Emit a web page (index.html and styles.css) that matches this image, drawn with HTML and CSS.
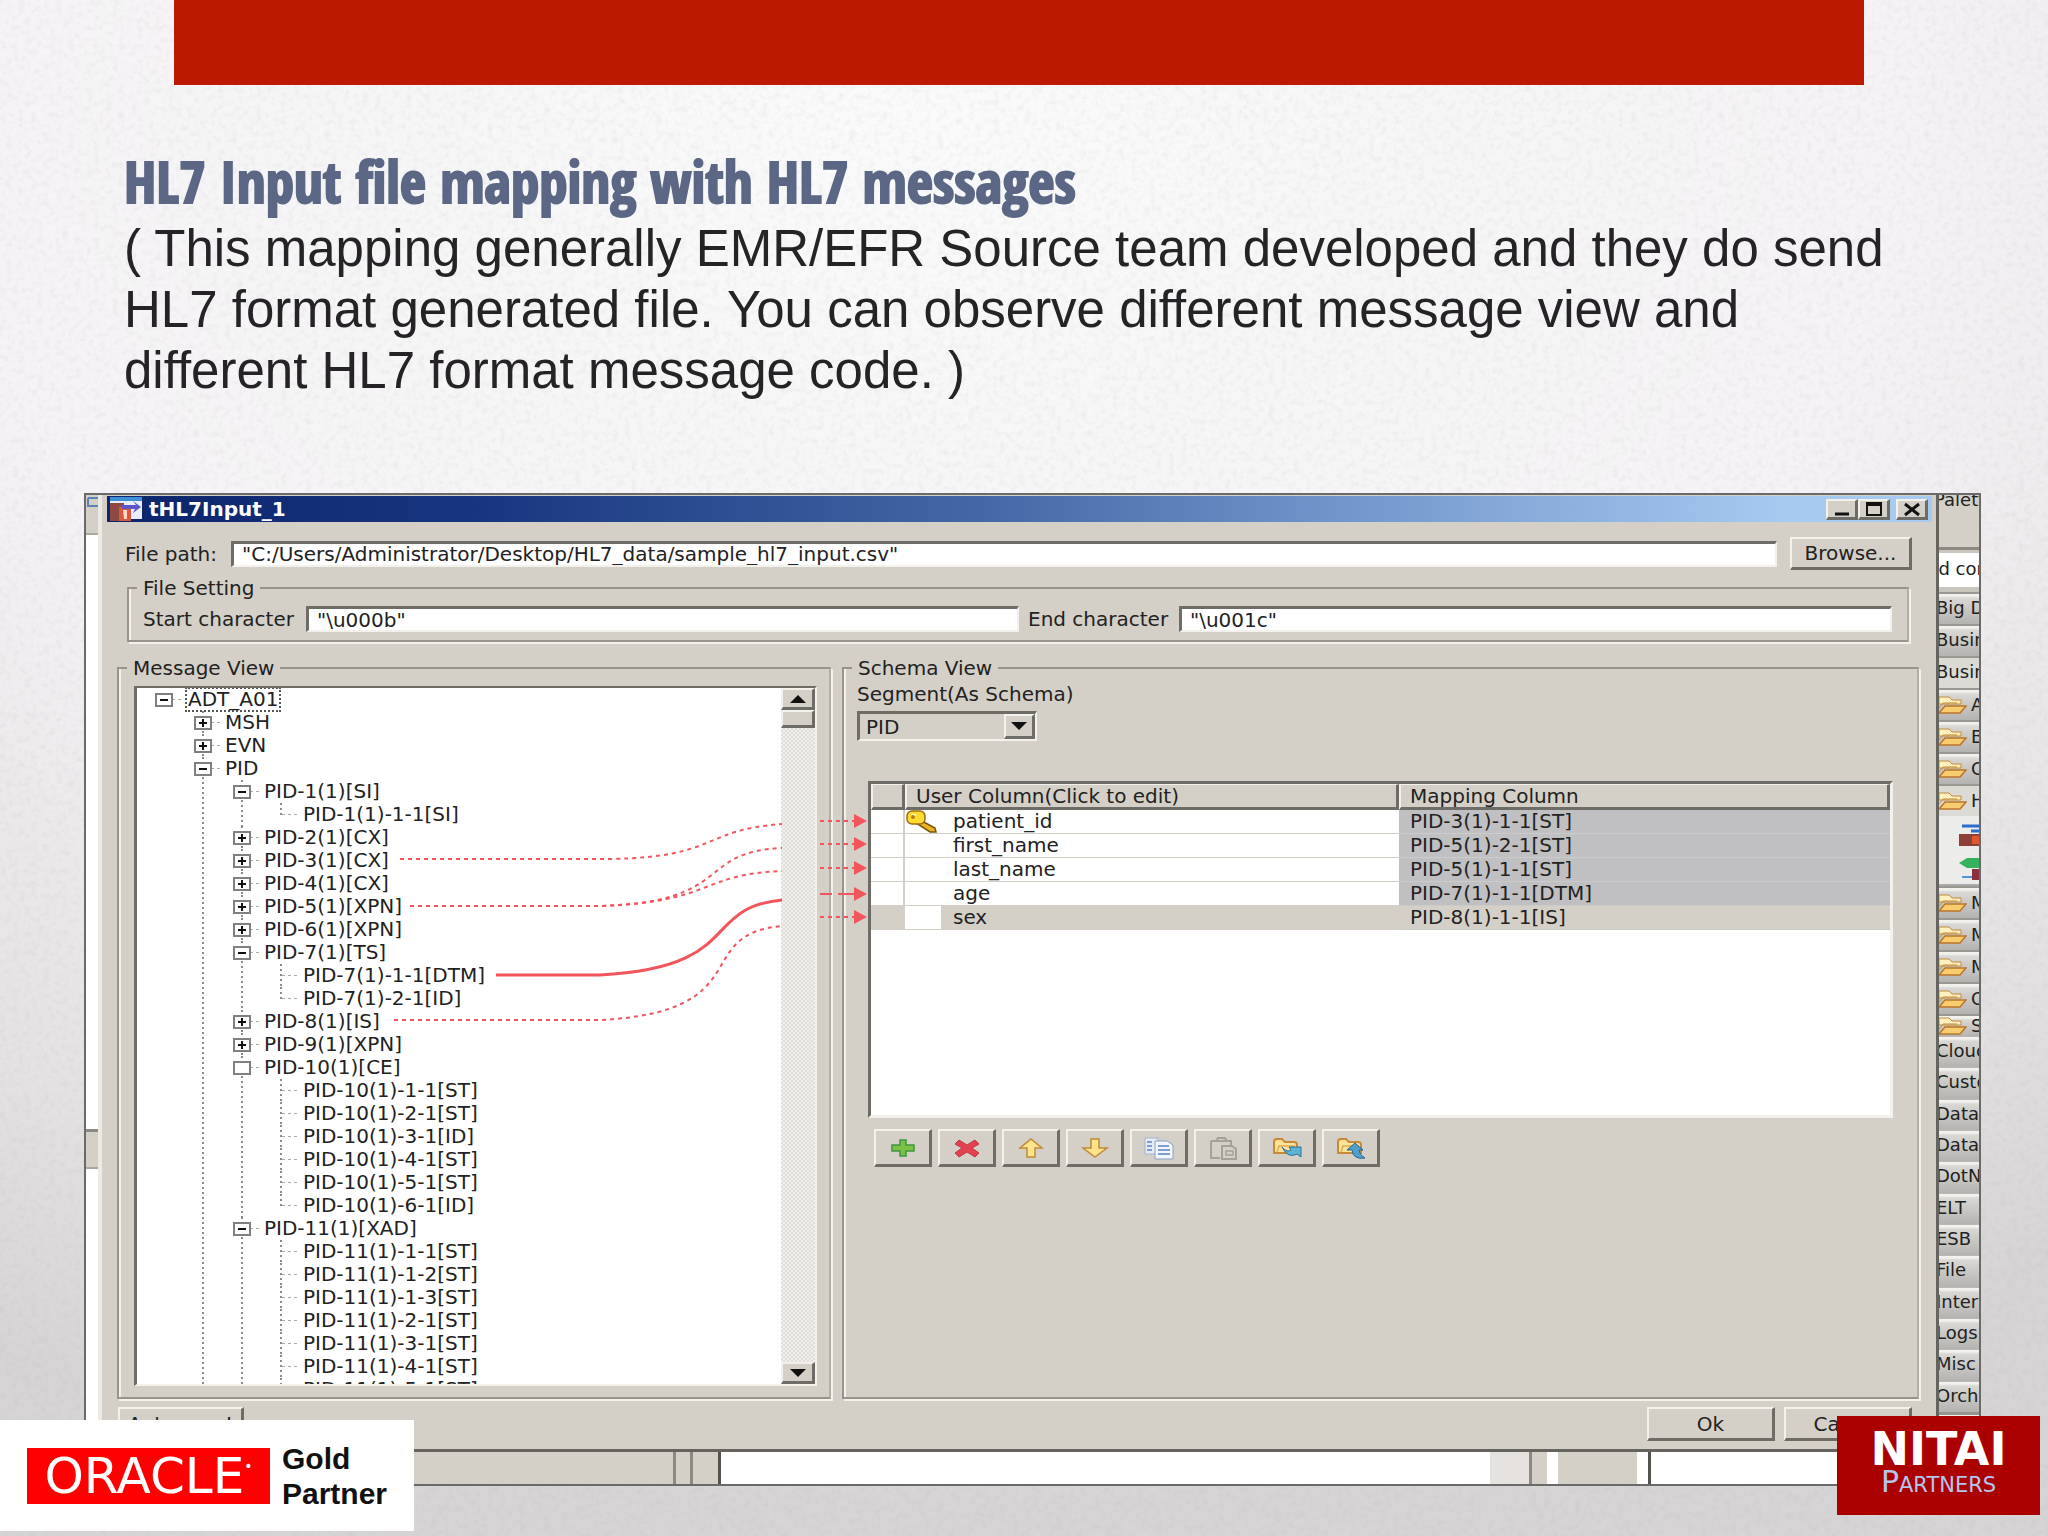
FILE: index.html
```html
<!DOCTYPE html>
<html lang="en">
<head>
<meta charset="utf-8">
<meta name="viewport" content="width=device-width, initial-scale=1">
<title>HL7 Input file mapping with HL7 messages</title>
<link rel="stylesheet" href="styles.css">
</head>
<body>
<svg class="paper" aria-hidden="true">
  <filter id="grain" x="0" y="0" width="100%" height="100%">
    <feTurbulence type="fractalNoise" baseFrequency="0.16" numOctaves="3" seed="4"/>
    <feColorMatrix values="0 0 0 0 0.4  0 0 0 0 0.39  0 0 0 0 0.39  1.6 0 0 0 -0.72"/>
  </filter>
  <rect width="100%" height="100%" filter="url(#grain)"/>
</svg>
<svg class="defs" aria-hidden="true">
  <symbol id="folder" viewBox="0 0 28 20">
    <path d="M0 2h10l3 3h9v4H0z" fill="#fff0c0" stroke="#c08a3c"/>
    <path d="M0 18l6-7h21l-6 7z" fill="#f8cd70" stroke="#b9772c" stroke-width="1.5"/>
    <path d="M0 13l4-5h14" fill="none" stroke="#c08a3c"/>
  </symbol>
  <symbol id="yellow-folder" viewBox="0 0 32 24">
    <path d="M3 17V6q0-3 3-3h5l3 3h9q3 0 3 3v8z" fill="#fde29a" stroke="#c98a35" stroke-width="2"/>
    <path d="M6 16l2-6h16" fill="none" stroke="#e0ac50" stroke-width="1.5"/>
  </symbol>
</svg>

<div class="slide">
  <div class="band"></div>
  <header class="intro">
    <h1>HL7 Input file mapping with HL7 messages</h1>
    <p>( This mapping generally EMR/EFR Source team developed and they do send HL7 format generated file. You can observe different message view and different HL7 format message code. )</p>
  </header>

  <main class="screen">
    <div class="edge">
      <div class="edge-tab"><svg width="12" height="12" viewBox="0 0 12 12"><path d="M2 3h10M2 3v8h10" fill="none" stroke="#5a84b4" stroke-width="2"/></svg></div>
      <div class="edge-page"></div>
      <div class="edge-tab low"></div>
      <div class="edge-page"></div>
    </div>

    <section class="dialog" aria-label="tHL7Input_1">
      <div class="titlebar">
        <svg class="app-icon" width="32" height="24" viewBox="0 0 32 24">
          <rect width="32" height="22" fill="#e8eefc"/><rect width="32" height="4" fill="#3f8fd8"/>
          <rect y="6" width="14" height="18" fill="#8d4a44"/><path d="M9 10h12v14H9z" fill="#d9573c"/>
          <path d="M12 8h14l-3-4 8 6-8 6 2-4H12z" fill="#5a55c8"/><path d="M13 13h4v9h-3z" fill="#ffd9c4"/>
        </svg>
        <span class="caption">tHL7Input_1</span>
        <button class="win" aria-label="Minimize"><svg width="24" height="16" viewBox="0 0 24 16"><path d="M5 13h14" stroke="#111" stroke-width="3"/></svg></button>
        <button class="win" aria-label="Maximize"><svg width="24" height="16" viewBox="0 0 24 16"><path d="M5 2h14v12H5zM5 4h14" fill="none" stroke="#111" stroke-width="2"/></svg></button>
        <button class="win close" aria-label="Close"><svg width="24" height="16" viewBox="0 0 24 16"><path d="M5 3l14 11M19 3L5 14" stroke="#111" stroke-width="3"/></svg></button>
      </div>

      <div class="path-row">
        <label for="path">File path:</label>
        <input id="path" class="field" type="text" value='"C:/Users/Administrator/Desktop/HL7_data/sample_hl7_input.csv"'>
        <button class="push browse">Browse...</button>
      </div>

      <fieldset class="group setting">
        <legend>File Setting</legend>
        <div class="setting-row">
          <label class="start" for="start">Start character</label>
          <input id="start" class="field" type="text" value='"\u000b"'>
          <label class="end" for="end">End character</label>
          <input id="end" class="field" type="text" value='"\u001c"'>
        </div>
      </fieldset>

      <div class="views">
        <fieldset class="group message">
          <legend>Message View</legend>
          <div class="tree-box">
            <ul class="tree">
              <li><div class="node"><button class="toggle" aria-label="Collapse"></button><span class="focus">ADT_A01</span></div>
                <ul>
                  <li><div class="node"><button class="toggle plus" aria-label="Expand"></button>MSH</div></li>
                  <li><div class="node"><button class="toggle plus" aria-label="Expand"></button>EVN</div></li>
                  <li class="open"><div class="node"><button class="toggle" aria-label="Collapse"></button>PID</div>
                    <ul>
                      <li><div class="node"><button class="toggle" aria-label="Collapse"></button>PID-1(1)[SI]</div>
                        <ul><li><div class="node leaf">PID-1(1)-1-1[SI]</div></li></ul></li>
                      <li><div class="node"><button class="toggle plus" aria-label="Expand"></button>PID-2(1)[CX]</div></li>
                      <li><div class="node"><button class="toggle plus" aria-label="Expand"></button>PID-3(1)[CX]</div></li>
                      <li><div class="node"><button class="toggle plus" aria-label="Expand"></button>PID-4(1)[CX]</div></li>
                      <li><div class="node"><button class="toggle plus" aria-label="Expand"></button>PID-5(1)[XPN]</div></li>
                      <li><div class="node"><button class="toggle plus" aria-label="Expand"></button>PID-6(1)[XPN]</div></li>
                      <li><div class="node"><button class="toggle" aria-label="Collapse"></button>PID-7(1)[TS]</div>
                        <ul>
                          <li><div class="node leaf">PID-7(1)-1-1[DTM]</div></li>
                          <li><div class="node leaf">PID-7(1)-2-1[ID]</div></li>
                        </ul></li>
                      <li><div class="node"><button class="toggle plus" aria-label="Expand"></button>PID-8(1)[IS]</div></li>
                      <li><div class="node"><button class="toggle plus" aria-label="Expand"></button>PID-9(1)[XPN]</div></li>
                      <li><div class="node"><button class="toggle blank" aria-label="Collapse"></button>PID-10(1)[CE]</div>
                        <ul>
                          <li><div class="node leaf">PID-10(1)-1-1[ST]</div></li>
                          <li><div class="node leaf">PID-10(1)-2-1[ST]</div></li>
                          <li><div class="node leaf">PID-10(1)-3-1[ID]</div></li>
                          <li><div class="node leaf">PID-10(1)-4-1[ST]</div></li>
                          <li><div class="node leaf">PID-10(1)-5-1[ST]</div></li>
                          <li><div class="node leaf">PID-10(1)-6-1[ID]</div></li>
                        </ul></li>
                      <li class="open"><div class="node"><button class="toggle" aria-label="Collapse"></button>PID-11(1)[XAD]</div>
                        <ul>
                          <li><div class="node leaf">PID-11(1)-1-1[ST]</div></li>
                          <li><div class="node leaf">PID-11(1)-1-2[ST]</div></li>
                          <li><div class="node leaf">PID-11(1)-1-3[ST]</div></li>
                          <li><div class="node leaf">PID-11(1)-2-1[ST]</div></li>
                          <li><div class="node leaf">PID-11(1)-3-1[ST]</div></li>
                          <li><div class="node leaf">PID-11(1)-4-1[ST]</div></li>
                          <li class="open"><div class="node leaf">PID-11(1)-5-1[ST]</div></li>
                        </ul></li>
                    </ul></li>
                </ul></li>
            </ul>
            <div class="scrollbar">
              <button class="step" aria-label="Scroll up"><svg width="16" height="8" viewBox="0 0 16 8"><path d="M0 8l8-8 8 8z" fill="#111"/></svg></button>
              <div class="thumb"></div>
              <div class="track"></div>
              <button class="step" aria-label="Scroll down"><svg width="16" height="8" viewBox="0 0 16 8"><path d="M0 0l8 8 8-8z" fill="#111"/></svg></button>
            </div>
          </div>
        </fieldset>

        <fieldset class="group schema">
          <legend>Schema View</legend>
          <label class="segment-label" for="segment">Segment(As Schema)</label>
          <div class="combo">
            <select id="segment"><option>PID</option></select>
            <span class="combo-arrow"><svg width="16" height="8" viewBox="0 0 16 8"><path d="M0 0l8 8 8-8z" fill="#111"/></svg></span>
          </div>
          <div class="grid-box">
            <table class="columns">
              <colgroup><col class="c-mark"><col class="c-key"><col class="c-user"><col class="c-map"></colgroup>
              <thead><tr><th></th><th colspan="2">User Column(Click to edit)</th><th>Mapping Column</th></tr></thead>
              <tbody>
                <tr><td></td><td class="key"><svg width="34" height="23" viewBox="0 0 34 23"><path d="M15 10l15 8 1 4h-6l-14-9z" fill="#e8b420" stroke="#7a5510" stroke-width="1.5"/><rect x="2" y="1" width="18" height="13" rx="5" fill="#ffdc30" stroke="#9a6c14" stroke-width="1.5"/><path d="M6 5h5" stroke="#fff9c0" stroke-width="2"/><circle cx="8" cy="7" r="2" fill="#c07a18"/></svg></td><td>patient_id</td><td>PID-3(1)-1-1[ST]</td></tr>
                <tr><td></td><td class="key"></td><td>first_name</td><td>PID-5(1)-2-1[ST]</td></tr>
                <tr><td></td><td class="key"></td><td>last_name</td><td>PID-5(1)-1-1[ST]</td></tr>
                <tr><td></td><td class="key"></td><td>age</td><td>PID-7(1)-1-1[DTM]</td></tr>
                <tr class="selected"><td></td><td class="key"></td><td>sex</td><td>PID-8(1)-1-1[IS]</td></tr>
              </tbody>
            </table>
          </div>
          <div class="toolbar">
            <button class="push tool" aria-label="Add"><svg width="32" height="24" viewBox="0 0 32 24"><path d="M13 4h6v5h8v6h-8v5h-6v-5H5V9h8z" fill="#7cc144" stroke="#3f9440" stroke-width="1.5"/></svg></button>
            <button class="push tool" aria-label="Remove"><svg width="32" height="24" viewBox="0 0 32 24"><path d="M8 4l8 5 8-5 4 4-7 4 7 5-4 4-8-5-8 5-4-4 7-5-7-4z" fill="#e2414f" stroke="#c03844"/></svg></button>
            <button class="push tool" aria-label="Move up"><svg width="32" height="24" viewBox="0 0 32 24"><path d="M16 3l11 9h-7v9h-8v-9H5z" fill="#ffe48c" stroke="#c08a34" stroke-width="1.5"/></svg></button>
            <button class="push tool" aria-label="Move down"><svg width="32" height="24" viewBox="0 0 32 24"><path d="M16 21l12-9h-8V3h-8v9H4z" fill="#ffe48c" stroke="#c08a34" stroke-width="1.5"/></svg></button>
            <button class="push tool" aria-label="Copy"><svg width="32" height="24" viewBox="0 0 32 24"><path d="M2 2h13v16H2z" fill="#e6ecf6" stroke="#a4b4d0"/><path d="M4 6h5M4 10h5M4 14h5" stroke="#7f9ed0" stroke-width="2"/><path d="M12 5h12l6 4v14H12z" fill="#f2f6fc" stroke="#8ca0c8"/><path d="M15 10h11M15 14h12M15 18h12" stroke="#7f9ed0" stroke-width="2"/></svg></button>
            <button class="push tool" aria-label="Paste"><svg width="32" height="24" viewBox="0 0 32 24"><path d="M4 5h20v4M4 5v17h9M9 5l2-3h7l2 3M15 10h10l4 3v10H15z" fill="none" stroke="#a3a199" stroke-width="2"/><path d="M19 14v5h7v-4h-7" fill="none" stroke="#a3a199" stroke-width="1.5"/></svg></button>
            <button class="push tool" aria-label="Import"><svg width="32" height="24" viewBox="0 0 32 24"><use href="#yellow-folder" width="32" height="24"/><path d="M11 11q5 6 9 3l-2-3h12v10l-4-3q-9 5-15-7z" fill="#5fb3d6" stroke="#2a6f9c"/></svg></button>
            <button class="push tool" aria-label="Export"><svg width="32" height="24" viewBox="0 0 32 24"><use href="#yellow-folder" width="32" height="24"/><path d="M12 14l8-7 8 7h-4q0 5 6 8-12 2-13-8z" fill="#4f9fcc" stroke="#27648f"/></svg></button>
          </div>
        </fieldset>

        <svg class="links" width="760" height="400" viewBox="117 658 760 400" aria-hidden="true">
          <g class="dotted">
            <path d="M400 859H610C720 857 700 830 782 824"/>
            <path d="M410 906H600C735 902 695 852 782 848"/>
            <path d="M410 906H600C715 902 700 874 782 871"/>
            <path d="M394 1020H600C760 1012 690 934 782 926"/>
            <path d="M820 821H856M820 844H856M820 868H856M820 917H856"/>
          </g>
          <path class="solid" d="M496 975H600C745 967 700 908 782 900"/>
          <path class="stub" d="M820 894H832M838 894H856"/>
          <path class="heads" d="M854 814l13 7-13 7zM854 837l13 7-13 7zM854 861l13 7-13 7zM854 887l13 7-13 7zM854 910l13 7-13 7z"/>
        </svg>
      </div>

      <div class="actions">
        <button class="push auto">Auto map!</button>
        <button class="push wide">Ok</button>
        <button class="push wide">Cancel</button>
      </div>
    </section>

    <aside class="palette">
      <div class="pal-title">Palette</div>
      <div class="pal-find">Find component...</div>
      <div class="pal-cat">Big Data</div>
      <div class="pal-cat">Business</div>
      <div class="pal-cat flat">Business</div>
      <div class="pal-sub"><svg width="28" height="20"><use href="#folder"/></svg>A</div>
      <div class="pal-sub"><svg width="28" height="20"><use href="#folder"/></svg>B</div>
      <div class="pal-sub"><svg width="28" height="20"><use href="#folder"/></svg>C</div>
      <div class="pal-sub flat"><svg width="28" height="20"><use href="#folder"/></svg>H</div>
      <div class="pal-items"><svg width="20" height="60" viewBox="0 0 20 60"><path d="M3 5h17M12 10h8" stroke="#2a6cd0" stroke-width="3"/><path d="M0 13h20v12H0z" fill="#8c4038"/><path d="M13 15h7v8h-7z" fill="#e0562e"/><path d="M0 42l8-5h12v10H8z" fill="#35b25a"/><path d="M3 56h10" stroke="#4b98d8" stroke-width="2"/><path d="M13 48h7v11h-7z" fill="#8c3040"/></svg></div>
      <div class="pal-sub"><svg width="28" height="20"><use href="#folder"/></svg>M</div>
      <div class="pal-sub"><svg width="28" height="20"><use href="#folder"/></svg>M</div>
      <div class="pal-sub"><svg width="28" height="20"><use href="#folder"/></svg>M</div>
      <div class="pal-sub"><svg width="28" height="20"><use href="#folder"/></svg>O</div>
      <div class="pal-sub cut"><svg width="28" height="20"><use href="#folder"/></svg>S</div>
      <div class="pal-list">
        <div class="pal-cat">Cloud</div><div class="pal-cat">Custom</div><div class="pal-cat">Data</div><div class="pal-cat">Data</div>
        <div class="pal-cat">DotNET</div><div class="pal-cat">ELT</div><div class="pal-cat">ESB</div><div class="pal-cat">File</div>
        <div class="pal-cat">Internet</div><div class="pal-cat">Logs</div><div class="pal-cat">Misc</div><div class="pal-cat">Orchestration</div>
      </div>
      <div class="pal-tail"></div>
    </aside>

    <div class="strip"><i></i><i class="line"></i><i class="line dark-end"></i><i class="white"></i><i class="pale"></i><i class="line"></i><i class="white"></i><i></i><i class="white"></i><i class="white dark-start"></i></div>
  </main>

  <div class="oracle">
    <span class="oracle-mark">ORACLE<sup>•</sup></span>
    <span class="oracle-tier">Gold<br>Partner</span>
  </div>
  <div class="nitai">
    <span class="nitai-name">NITAI</span>
    <span class="nitai-sub">Partners</span>
  </div>
</div>
</body>
</html>
```
FILE: styles.css
```css
* { box-sizing: border-box; }

:root {
  --face: #d4d0c8;
  --dark: #6e6c66;
  --light: #f3f1ec;
}

body {
  margin: 0;
  background: radial-gradient(ellipse 95% 90% at 45% 8%, #fafafa 0%, #f5f3f5 50%, #e2e0e1 85%, #d6d4d5 100%);
  color: #222;
  font-family: "DejaVu Sans", Verdana, sans-serif;
  font-size: 20px;
}

.paper { position: absolute; inset: 0; width: 100%; height: 100%; opacity: .18; }
.defs { position: absolute; width: 0; height: 0; }

.slide { position: relative; min-height: 100vh; padding-bottom: 49px; overflow: hidden; }
.band { height: 85px; margin: 0 184px 0 174px; background: #bc1a00; }

.intro { padding: 64px 120px 92px 124px; }
.intro h1 {
  margin: 0 0 5px;
  color: #5b6785;
  font: 800 57px/64px Impact, "Open Sans Condensed ExtraBold", "Open Sans Condensed", "Open Sans", sans-serif;
  -webkit-text-stroke: 2px #5b6785;
}
.intro p {
  margin: 0;
  color: #252326;
  font: 51px/61px "Liberation Sans", Arial, sans-serif;
}

/* Captured application window */
.screen {
  display: grid;
  grid-template-columns: 12px 1fr 40px;
  grid-template-rows: 1fr 32px;
  margin: 0 67px 0 84px;
  border: 2px solid #6a6a6a;
  background: var(--face);
}

.edge { display: flex; flex-direction: column; background: #fff; }
.edge-tab { height: 40px; background: var(--face); border-bottom: 2px solid #aaa89f; }
.edge-tab svg { display: block; }
.edge-tab.low { border-top: 3px solid #8b8982; }
.edge-page { flex: 595; }
.edge-page:last-child { flex: 283; }

.dialog {
  display: flex;
  flex-direction: column;
  min-width: 0;
  border: solid #66645e;
  border-width: 0 3px 3px 0;
  border-left: 4px solid #eceae5;
  background: var(--face);
}

.titlebar {
  display: flex;
  align-items: center;
  height: 26px;
  margin: 1px 4px 0 5px;
  padding: 0 4px 0 3px;
  background: linear-gradient(90deg, #0c256c 0%, #17357f 20%, #4468a6 48%, #7396cc 68%, #a6caf0 92%);
}
.caption { flex: 1; padding-left: 7px; color: #fff; font-weight: 700; line-height: 24px; }
.app-icon { flex: none; }
.win, .push, .step {
  padding: 0;
  border: solid;
  border-width: 2px 3px 3px 2px;
  border-color: var(--light) var(--dark) var(--dark) var(--light);
  background: var(--face);
  color: #222;
  font: inherit;
}
.win { display: flex; align-items: center; justify-content: center; width: 32px; height: 21px; }
.win.close { margin-left: 6px; }

.path-row { display: flex; align-items: center; margin: 15px 24px 8px 23px; }
.path-row label { width: 106px; }
.field {
  flex: 1;
  min-width: 0;
  height: 26px;
  padding: 0 8px;
  border: solid;
  border-width: 3px 2px 2px 3px;
  border-color: var(--dark) var(--light) var(--light) var(--dark);
  background: #fff;
  color: #222;
  font: inherit;
}
.browse { width: 122px; height: 33px; margin-left: 13px; }

.group {
  min-width: 0;
  margin: 0;
  padding: 0;
  border: 2px solid #96948d;
  border-right-color: #b0aea6;
  box-shadow: 2px 2px 0 var(--light), inset 2px 0 0 var(--light);
}
.group legend { height: 20px; margin-left: 8px; padding: 0 6px; background: var(--face); line-height: 20px; }
.setting { margin: 0 27px 16px 25px; }
.setting-row { display: flex; align-items: center; padding: 8px 15px 8px 14px; }
.start { width: 163px; }
.end { width: 151px; margin-left: 9px; }

.views {
  position: relative;
  display: grid;
  grid-template-columns: 714px 1fr;
  gap: 11px;
  margin: 0 17px 0 15px;
}
.links { position: absolute; left: 0; top: 0; pointer-events: none; }
.links path { fill: none; stroke: #f2565c; stroke-width: 2; }
.links .dotted path { stroke-dasharray: 4 4; stroke-width: 2; }
.links .solid { stroke-width: 3; }
.links .heads { fill: #f2565c; stroke: none; }

.tree-box {
  display: flex;
  height: 700px;
  margin: 8px 12px 11px 15px;
  border: solid;
  border-width: 2px 2px 2px 3px;
  border-color: var(--dark) var(--light) var(--light) var(--dark);
  background: #fff;
  overflow: hidden;
}
.tree { flex: 1; margin: 0; padding: 0 0 0 18px; line-height: 23px; }
.tree ul { margin: 0; padding: 0 0 0 39px; }
.tree li { list-style: none; }
.tree ul li {
  background: repeating-linear-gradient(#8a8a8a 0 2px, transparent 2px 5px) 8px 0 / 2px 100% no-repeat;
}
.tree ul li:last-child:not(.open) { background-size: 2px 12px; }
.node {
  display: flex;
  align-items: center;
  height: 23px;
  white-space: nowrap;
  background: repeating-linear-gradient(90deg, #aaa 0 3px, transparent 3px 6px) 17px 11px / 12px 1px no-repeat;
}
.leaf { padding-left: 31px; background-position: 10px 11px; background-size: 18px 1px; }
.toggle {
  flex: none;
  width: 18px;
  height: 14px;
  margin-right: 13px;
  padding: 0;
  border: 2px solid #808080;
  background: linear-gradient(#111, #111) center / 8px 2px no-repeat #fff;
}
.toggle.plus {
  background: linear-gradient(#111, #111) center / 8px 2px no-repeat, linear-gradient(#111, #111) center / 2px 8px no-repeat #fff;
}
.toggle.blank { background: #fff; }
.focus { outline: 2px dotted #555; outline-offset: -1px; padding: 0 2px; }

.scrollbar {
  display: flex;
  flex-direction: column;
  width: 34px;
  background: repeating-conic-gradient(#e2dfdb 0 25%, #f0efed 0 50%) 0 0 / 4px 4px;
}
.step { display: flex; align-items: center; justify-content: center; height: 22px; }
.thumb { height: 18px; border: solid; border-width: 2px 3px 3px 2px; border-color: var(--light) var(--dark) var(--dark) var(--light); background: var(--face); }
.track { flex: 1; }

.segment-label { display: block; margin: 4px 0 5px 13px; line-height: 24px; }
.combo {
  display: flex;
  width: 180px;
  height: 30px;
  margin-left: 13px;
  border: solid;
  border-width: 3px 2px 2px 3px;
  border-color: var(--dark) var(--light) var(--light) var(--dark);
}
.combo select {
  flex: 1;
  padding: 0 6px;
  border: 0;
  appearance: none;
  background: var(--face);
  color: #222;
  font: inherit;
}
.combo-arrow {
  display: flex;
  align-items: center;
  justify-content: center;
  width: 31px;
  border: solid;
  border-width: 2px 3px 3px 2px;
  border-color: var(--light) var(--dark) var(--dark) var(--light);
}

.grid-box {
  height: 337px;
  margin: 40px 24px 0 24px;
  border: 3px solid;
  border-color: var(--dark) var(--light) var(--light) var(--dark);
  background: #fff;
}
.columns { width: 100%; border-collapse: separate; border-spacing: 0; table-layout: fixed; line-height: 23px; }
.c-mark { width: 34px; }
.c-key { width: 36px; }
.c-user { width: 458px; }
.columns th {
  height: 26px;
  padding: 0 0 0 9px;
  border: solid;
  border-width: 1px 3px 3px 2px;
  border-color: var(--light) var(--dark) var(--dark) var(--light);
  background: var(--face);
  font-weight: 400;
  line-height: 22px;
  text-align: left;
}
.columns td { height: 24px; padding: 0; border-bottom: 1px solid #d4d0c8; }
.columns td:first-child { border-right: 2px solid #d4d0c8; }
.columns td:nth-child(3) { padding-left: 12px; }
.columns td:last-child { padding-left: 11px; background: #c0bfc1; border-color: #cccbcc; }
.key svg { display: block; }
.columns .selected td { background: var(--face); }
.columns .selected .key { background: #fff; }

.toolbar { display: flex; gap: 6px; margin: 11px 0 0 30px; }
.tool { display: flex; align-items: center; justify-content: center; width: 58px; height: 38px; }

.actions { display: flex; gap: 9px; padding: 8px 24px 8px 16px; }
.actions .push { height: 34px; }
.auto { width: 126px; margin-right: auto; }
.wide { width: 128px; }

/* Component palette showing from behind the dialog */
.palette { display: flex; flex-direction: column; min-width: 0; overflow: hidden; font-size: 18px; white-space: nowrap; }
.palette > div { flex: none; overflow: hidden; }
.pal-title { height: 55px; border-bottom: 3px solid #8b8982; line-height: 10px; text-indent: -5px; }
.pal-find { height: 42px; border: solid #c9c6be; border-width: 3px 0 5px; background: #fff; line-height: 32px; text-indent: -26px; }
.pal-cat, .pal-sub {
  height: 32px;
  border-top: 2px solid #9a9891;
  background: linear-gradient(#f2f1ee 0 2px, #dad8d4 4px, #b4b3b1);
  line-height: 28px;
}
.pal-cat { text-indent: -3px; }
.pal-cat.flat, .pal-sub.flat { background: #dcdad5; }
.pal-sub { display: flex; align-items: center; gap: 4px; }
.pal-sub svg { flex: none; }
.pal-sub.cut { height: 22px; }
.pal-items { height: 70px; padding: 5px 0 0 20px; background: #ececeb; border-bottom: 2px solid #aaa; }
.palette > .pal-list { display: flex; flex: 1; flex-direction: column; }
.pal-list .pal-cat { flex: 1; height: auto; min-height: 0; overflow: hidden; border-top: 1px solid #bbb9b3; }
.pal-tail { height: 40px; border-top: 3px solid #96948d; background: var(--light); }

.strip {
  grid-column: 1 / -1;
  display: grid;
  grid-template-columns: 587px 17px 31px 1fr 39px 18px 11px 79px 11px 331px;
}
.strip .line { border-left: 3px solid #8b8982; }
.strip .dark-end { border-right: 3px solid #55534e; }
.strip .white { background: #fff; }
.strip .pale { background: #e6e2df; }
.strip .dark-start { border-left: 3px solid #55534e; }

/* Partner logos laid over the slide corners */
.oracle, .nitai { position: absolute; display: flex; }
.oracle { left: 0; bottom: 5px; gap: 12px; align-items: center; width: 414px; height: 111px; padding-left: 27px; background: #fff; }
.oracle-mark {
  display: flex;
  justify-content: center;
  width: 243px;
  height: 56px;
  background: #fe0000;
  color: #fff;
  font-size: 50px;
  line-height: 56px;
}
.oracle-mark sup { font-size: 14px; line-height: 36px; }
.oracle-tier { color: #111; font: 700 30px/35px "Liberation Sans", Arial, sans-serif; }
.nitai { right: 8px; bottom: 21px; flex-direction: column; align-items: center; width: 203px; height: 99px; padding-top: 14px; background: #ab0000; }
.nitai-name { color: #fff; font-weight: 700; font-size: 46px; line-height: 38px; }
.nitai-sub { color: #b4c6ec; font-size: 30px; line-height: 28px; font-variant: small-caps; }
```
